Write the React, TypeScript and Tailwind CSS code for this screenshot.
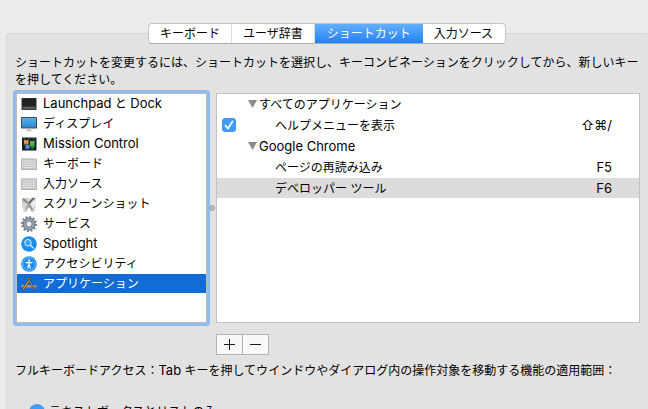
import { useState } from "react";
import type { ReactNode } from "react";

const Latin = ({ children }: { children: ReactNode }) => (
  <span className="text-[13px]">{children}</span>
);

function DockIcon() {
  return (
    <svg viewBox="0 0 16 16" className="size-4">
      <rect x="0.5" y="2" width="15" height="12" rx="0.5" fill="#3a3a3c" />
      <rect x="1" y="2.5" width="14" height="8" fill="#222224" />
      <rect x="1" y="10.5" width="14" height="3" fill="#3c3d40" />
      <path d="M2.5 12h11" stroke="#a4a6a9" strokeDasharray="1.2 0.8" />
    </svg>
  );
}

function DisplayIcon() {
  return (
    <svg viewBox="0 0 16 16" className="size-4">
      <defs>
        <linearGradient id="screen" x1="0" y1="0" x2="0" y2="1">
          <stop offset="0" stopColor="#56b0ea" />
          <stop offset="1" stopColor="#2c8ad2" />
        </linearGradient>
      </defs>
      <rect x="0" y="1" width="16" height="11.5" rx="0.8" fill="#3f4a54" />
      <rect x="1" y="2" width="14" height="9.5" fill="url(#screen)" />
      <path d="M6.3 12.5h3.4l.4 2H5.9z" fill="#c0c2c4" />
      <rect x="5" y="14.2" width="6" height="1" fill="#c9cacb" />
    </svg>
  );
}

function MissionControlIcon() {
  return (
    <svg viewBox="0 0 16 16" className="size-4">
      <rect x="1" y="1.5" width="14.5" height="13" fill="#17222d" />
      <rect x="2.5" y="2.5" width="2" height="1" fill="#59636d" />
      <rect x="7" y="2.5" width="2" height="1" fill="#7c522f" />
      <rect x="11.5" y="2.5" width="2" height="1" fill="#4d5f70" />
      <rect x="3" y="4.5" width="4.5" height="4" fill="#dc8b3e" />
      <rect x="3" y="4.5" width="4.5" height="1" fill="#efbf7c" />
      <rect x="9" y="5.5" width="4.5" height="5" fill="#3bb648" />
      <rect x="9" y="5.5" width="4.5" height="1" fill="#82cf7b" />
      <rect x="4.5" y="9" width="4" height="3.8" fill="#4a94df" />
      <rect x="10" y="10.5" width="3" height="2" fill="#278538" />
    </svg>
  );
}

function KeyboardIcon() {
  return (
    <svg viewBox="0 0 16 16" className="size-4">
      <rect x="0" y="2.5" width="16" height="11.5" rx="1" fill="#a9a9a9" />
      <rect x="0.5" y="2.8" width="15" height="10.4" rx="0.6" fill="#c6c6c6" />
      <path
        d="M1.5 5h13M1.5 7.2h13M1.5 9.4h13"
        stroke="#e6e6e6"
        strokeWidth="1.2"
        strokeDasharray="1.2 0.5"
      />
      <path d="M1.5 11.5h2.2M4.4 11.5h7M12.2 11.5h2.3" stroke="#e6e6e6" />
    </svg>
  );
}

function ScreenshotIcon() {
  return (
    <svg viewBox="0 0 16 16" className="size-4">
      <rect x="1" y="2" width="14" height="10" fill="#d6d6d6" />
      <rect x="1.5" y="2.5" width="4.5" height="4" fill="#bcbcbc" />
      <rect x="10.5" y="5" width="4.5" height="6" fill="#ebebeb" />
      <path d="m2 3 5.5 4.5L11.5 15" fill="none" stroke="#8d8984" strokeWidth="1.8" />
      <path d="M13.5 1.8 8 7.5 4.5 15" fill="none" stroke="#a8a49e" strokeWidth="1.9" />
      <path d="m8 7 4.8-5" stroke="#5b5650" strokeWidth="1.5" />
      <circle cx="4" cy="13.7" r="1.6" fill="none" stroke="#c6c6c6" />
      <circle cx="12" cy="13.7" r="1.4" fill="none" stroke="#b3b3b3" />
    </svg>
  );
}

function GearIcon() {
  return (
    <svg viewBox="0 0 16 16" className="size-4">
      <circle
        cx="8"
        cy="8"
        r="6.9"
        fill="none"
        stroke="#6f7c89"
        strokeWidth="2.2"
        strokeDasharray="1.95 1.663"
      />
      <circle cx="8" cy="8" r="4.5" fill="none" stroke="#76838f" strokeWidth="4" />
      <circle cx="8" cy="8" r="4.4" fill="none" stroke="#98a5b2" strokeWidth="1.6" />
      <circle cx="8" cy="8" r="2.1" fill="#e8ebee" />
    </svg>
  );
}

function SpotlightIcon() {
  return (
    <svg viewBox="0 0 16 16" className="size-4">
      <circle cx="8" cy="8" r="7.8" fill="#1b8ff0" />
      <circle cx="7" cy="6.8" r="3.3" fill="#3ba3f5" stroke="#d5ecfe" strokeWidth="1" />
      <path d="m9.5 9.3 2.8 2.8" stroke="#d5ecfe" strokeWidth="1.3" strokeLinecap="round" />
    </svg>
  );
}

function AccessibilityIcon() {
  return (
    <svg viewBox="0 0 16 16" className="size-4">
      <circle cx="8" cy="8" r="7.8" fill="#1b8df0" />
      <circle cx="8" cy="8" r="6.3" fill="none" stroke="#8cc8fa" strokeWidth="0.8" />
      <circle cx="8" cy="4.6" r="1.1" fill="#fff" />
      <path
        d="M5 6.6h6M8 6.8v2.4M6.8 12 7.5 9h1l.7 3"
        fill="none"
        stroke="#fff"
        strokeWidth="1.2"
        strokeLinecap="round"
        strokeLinejoin="round"
      />
    </svg>
  );
}

function AppsIcon() {
  return (
    <svg viewBox="0 0 16 16" className="size-4">
      <path d="M0.5 10.5h15" stroke="#b98a4e" strokeWidth="2" />
      <path d="M0.5 10h15" stroke="#dcb67c" strokeWidth="0.7" />
      <path d="M9 2.3 2 14" stroke="#4d3a28" strokeWidth="2.4" />
      <path d="M9 2.3 2.3 13.5" stroke="#cf9a58" strokeWidth="1.4" />
      <path d="m7 2.3 7 11.7" stroke="#4a4744" strokeWidth="2.2" />
      <path d="m7 2.3 6.8 11.4" stroke="#a49a8e" strokeWidth="0.9" />
    </svg>
  );
}

const categories: { id: string; label: ReactNode; icon: ReactNode }[] = [
  {
    id: "dock",
    label: (
      <>
        <Latin>Launchpad</Latin> と <Latin>Dock</Latin>
      </>
    ),
    icon: <DockIcon />,
  },
  { id: "display", label: "ディスプレイ", icon: <DisplayIcon /> },
  { id: "mission", label: <Latin>Mission Control</Latin>, icon: <MissionControlIcon /> },
  { id: "keyboard", label: "キーボード", icon: <KeyboardIcon /> },
  { id: "input", label: "入力ソース", icon: <KeyboardIcon /> },
  { id: "screenshot", label: "スクリーンショット", icon: <ScreenshotIcon /> },
  { id: "services", label: "サービス", icon: <GearIcon /> },
  { id: "spotlight", label: <Latin>Spotlight</Latin>, icon: <SpotlightIcon /> },
  { id: "accessibility", label: "アクセシビリティ", icon: <AccessibilityIcon /> },
  { id: "apps", label: "アプリケーション", icon: <AppsIcon /> },
];

const tabs = ["キーボード", "ユーザ辞書", "ショートカット", "入力ソース"];

function GroupRow({ children }: { children: ReactNode }) {
  return (
    <tr className="h-5">
      <td className="p-0" />
      <th colSpan={2} scope="rowgroup" className="p-0 text-left font-normal">
        <button type="button" className="flex h-5 items-center gap-0.5">
          <svg viewBox="0 0 9 8" className="h-2 w-[9px]">
            <path d="M0 0h9L4.5 8z" fill="#8a8a8a" />
          </svg>
          {children}
        </button>
      </th>
    </tr>
  );
}

function ShortcutRow({
  name,
  keys,
  control,
  selected = false,
}: {
  name: ReactNode;
  keys: ReactNode;
  control?: ReactNode;
  selected?: boolean;
}) {
  return (
    <tr className={selected ? "h-5 bg-[#dcdcdc]" : "h-5"}>
      <td className="p-0 pl-[5px]">{control}</td>
      <td className="p-0 pl-[27px]">{name}</td>
      <td className="p-0 pr-[27px] text-right text-[13px]">{keys}</td>
    </tr>
  );
}

export default function App() {
  const [tab, setTab] = useState(2);
  const [category, setCategory] = useState("apps");
  const [helpEnabled, setHelpEnabled] = useState(true);

  return (
    <div className="flex h-screen flex-col overflow-hidden bg-[#ececec] pt-[23px] font-[Inter,'Noto_Sans_CJK_JP',sans-serif] text-xs leading-[17px] text-black">
      <div
        role="tablist"
        className="z-10 -mb-[11px] ml-1.5 flex h-[21px] shrink-0 self-center overflow-hidden rounded-[4px] border border-[#c4c4c4] border-b-[#ababab] bg-white"
      >
        {tabs.map((label, i) => (
          <button
            key={label}
            type="button"
            role="tab"
            aria-selected={i === tab}
            onClick={() => setTab(i)}
            className={
              i === tab
                ? "-my-px bg-linear-to-b from-[#68b1fa] to-[#157efb] px-3 text-white"
                : "border-r border-[#dcdcdc] px-[11px] last:border-r-0 last:pr-3"
            }
          >
            {label}
          </button>
        ))}
      </div>

      <main className="-mr-px ml-1.5 grow rounded-t-[4px] border border-[#d6d6d6] bg-[#e2e2e2] pt-5 pr-2 pl-2">
        <p>
          ショートカットを変更するには、ショートカットを選択し、キーコンビネーションをクリックしてから、新しいキーを押してください。
        </p>

        <div className="mt-[5px] flex h-[230px]">
          <ul className="ml-px w-[191px] shrink-0 space-y-px rounded-[1px] border border-[#bdbdbd] bg-white ring-3 ring-[#91bdec]">
            {categories.map((item) => (
              <li key={item.id}>
                <button
                  type="button"
                  onClick={() => setCategory(item.id)}
                  className={
                    item.id === category
                      ? "flex h-[19px] w-full items-center gap-1.5 bg-[#116cd6] px-1 text-white"
                      : "flex h-[19px] w-full items-center gap-1.5 px-1"
                  }
                >
                  {item.icon}
                  <span>{item.label}</span>
                </button>
              </li>
            ))}
          </ul>

          <div role="separator" className="z-10 flex w-[9px] shrink-0 items-center justify-center">
            <span className="size-1.5 rounded-full border border-[#a3a3a3] bg-[#b9b9b9]" />
          </div>

          <div className="grow border border-[#c3c3c3] bg-white">
            <table className="-mt-px w-full table-fixed border-separate border-spacing-x-0 border-spacing-y-px">
              <colgroup>
                <col className="w-[31px]" />
                <col />
                <col className="w-24" />
              </colgroup>
              <tbody>
                <GroupRow>すべてのアプリケーション</GroupRow>
                <ShortcutRow
                  name={<label htmlFor="help">ヘルプメニューを表示</label>}
                  keys="⇧⌘/"
                  control={
                    <span className="grid size-3.5">
                      <input
                        id="help"
                        type="checkbox"
                        checked={helpEnabled}
                        onChange={(e) => setHelpEnabled(e.target.checked)}
                        className="peer col-start-1 row-start-1 size-3.5 appearance-none rounded-[3px] border border-[#b5b5b5] checked:border-[#3a93f7] checked:bg-[#429bf9]"
                      />
                      <svg
                        viewBox="0 0 14 14"
                        className="pointer-events-none invisible col-start-1 row-start-1 size-3.5 peer-checked:visible"
                      >
                        <path
                          d="m3.5 7.6 2.4 2.9 4.6-7"
                          fill="none"
                          stroke="#fff"
                          strokeWidth="1.7"
                          strokeLinecap="round"
                          strokeLinejoin="round"
                        />
                      </svg>
                    </span>
                  }
                />
                <GroupRow>
                  <Latin>Google Chrome</Latin>
                </GroupRow>
                <ShortcutRow name="ページの再読み込み" keys="F5" />
                <ShortcutRow name="デベロッパー ツール" keys="F6" selected />
              </tbody>
            </table>
          </div>
        </div>

        <div className="mt-[11px] ml-[201px] flex h-[21px] w-[53px] border border-[#b3b3b3] bg-[#f8f8f8]">
          <button
            type="button"
            aria-label="追加"
            className="flex flex-1 items-center justify-center border-r border-[#b3b3b3]"
          >
            <svg viewBox="0 0 11 11" className="size-[11px]">
              <path d="M0 5.5h11M5.5 0v11" stroke="#1c1c1c" />
            </svg>
          </button>
          <button type="button" aria-label="削除" className="flex flex-1 items-center justify-center">
            <svg viewBox="0 0 11 11" className="size-[11px]">
              <path d="M0 5.5h11" stroke="#1c1c1c" />
            </svg>
          </button>
        </div>

        <fieldset className="mt-[7px]">
          <legend>
            フルキーボードアクセス：<Latin>Tab</Latin>{" "}
            キーを押してウインドウやダイアログ内の操作対象を移動する機能の適用範囲：
          </legend>
          <label className="mt-6 ml-3.5 flex items-center gap-1">
            <input
              type="radio"
              name="access"
              defaultChecked
              className="size-4 appearance-none rounded-full border-[5px] border-[#429bf9] bg-white"
            />
            テキストボックスとリストのみ
          </label>
        </fieldset>
      </main>
    </div>
  );
}
